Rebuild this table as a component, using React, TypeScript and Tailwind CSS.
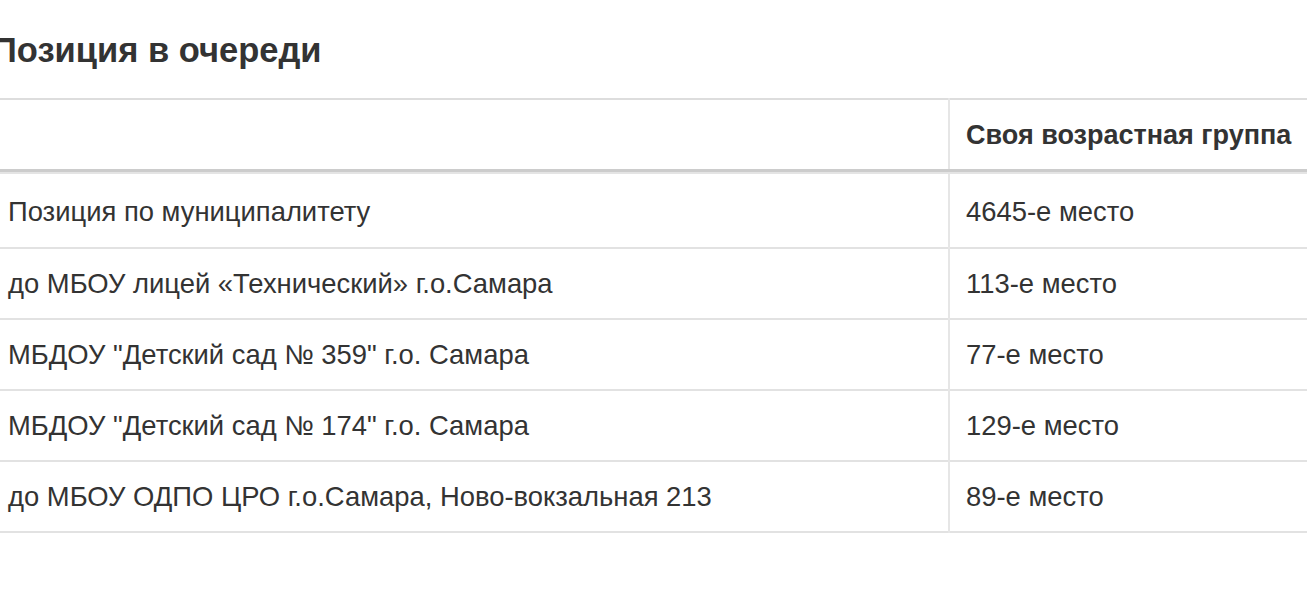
import React from "react";

const rows: [string, string][] = [
  ["Позиция по муниципалитету", "4645-е место"],
  ["до МБОУ лицей «Технический» г.о.Самара", "113-е место"],
  ['МБДОУ "Детский сад № 359" г.о. Самара', "77-е место"],
  ['МБДОУ "Детский сад № 174" г.о. Самара', "129-е место"],
  ["до МБОУ ОДПО ЦРО г.о.Самара, Ново-вокзальная 213", "89-е место"],
];

export default function App() {
  return (
    <div
      className="w-[1307px] h-[591px] overflow-hidden bg-white text-[#333333]"
      style={{ fontFamily: '"Liberation Sans", Arial, sans-serif' }}
    >
      <div className="-ml-[8px] w-[1330px]">
        <h2 className="pt-[31px] h-[98px] text-[34.5px] font-bold leading-[38px] whitespace-nowrap">
          Позиция в очереди
        </h2>
        <table className="w-full border-collapse text-[27.4px] leading-[34px]">
          <thead>
            <tr className="border-t-2 border-[#dddddd]">
              <th className="w-[957px] h-[70px] border-r-2 border-[#e6e6e6]"></th>
              <th className="h-[70px] px-[16px] text-left text-[27px] font-bold align-middle whitespace-nowrap">
                Своя возрастная группа
              </th>
            </tr>
            <tr>
              <th colSpan={2} className="p-0 h-[5px]">
                <div className="h-[3px] bg-[#cccccc]"></div>
                <div className="h-[2px] bg-[#e4e4e4]"></div>
              </th>
            </tr>
          </thead>
          <tbody>
            {rows.map(([a, b], i) => (
              <tr key={i} className={i === 0 ? "" : "border-t-2 border-[#e2e2e2]"}>
                <td
                  className={
                    (i === 0 ? "h-[74px] pt-[2px] " : "h-[71px] ") +
                    "px-[16px] border-r-2 border-[#e6e6e6] align-middle whitespace-nowrap"
                  }
                >
                  {a}
                </td>
                <td
                  className={
                    (i === 0 ? "pt-[2px] " : "") + "px-[16px] align-middle whitespace-nowrap"
                  }
                >
                  {b}
                </td>
              </tr>
            ))}
            <tr className="border-t-2 border-[#e2e2e2]">
              <td colSpan={2}></td>
            </tr>
          </tbody>
        </table>
      </div>
    </div>
  );
}
